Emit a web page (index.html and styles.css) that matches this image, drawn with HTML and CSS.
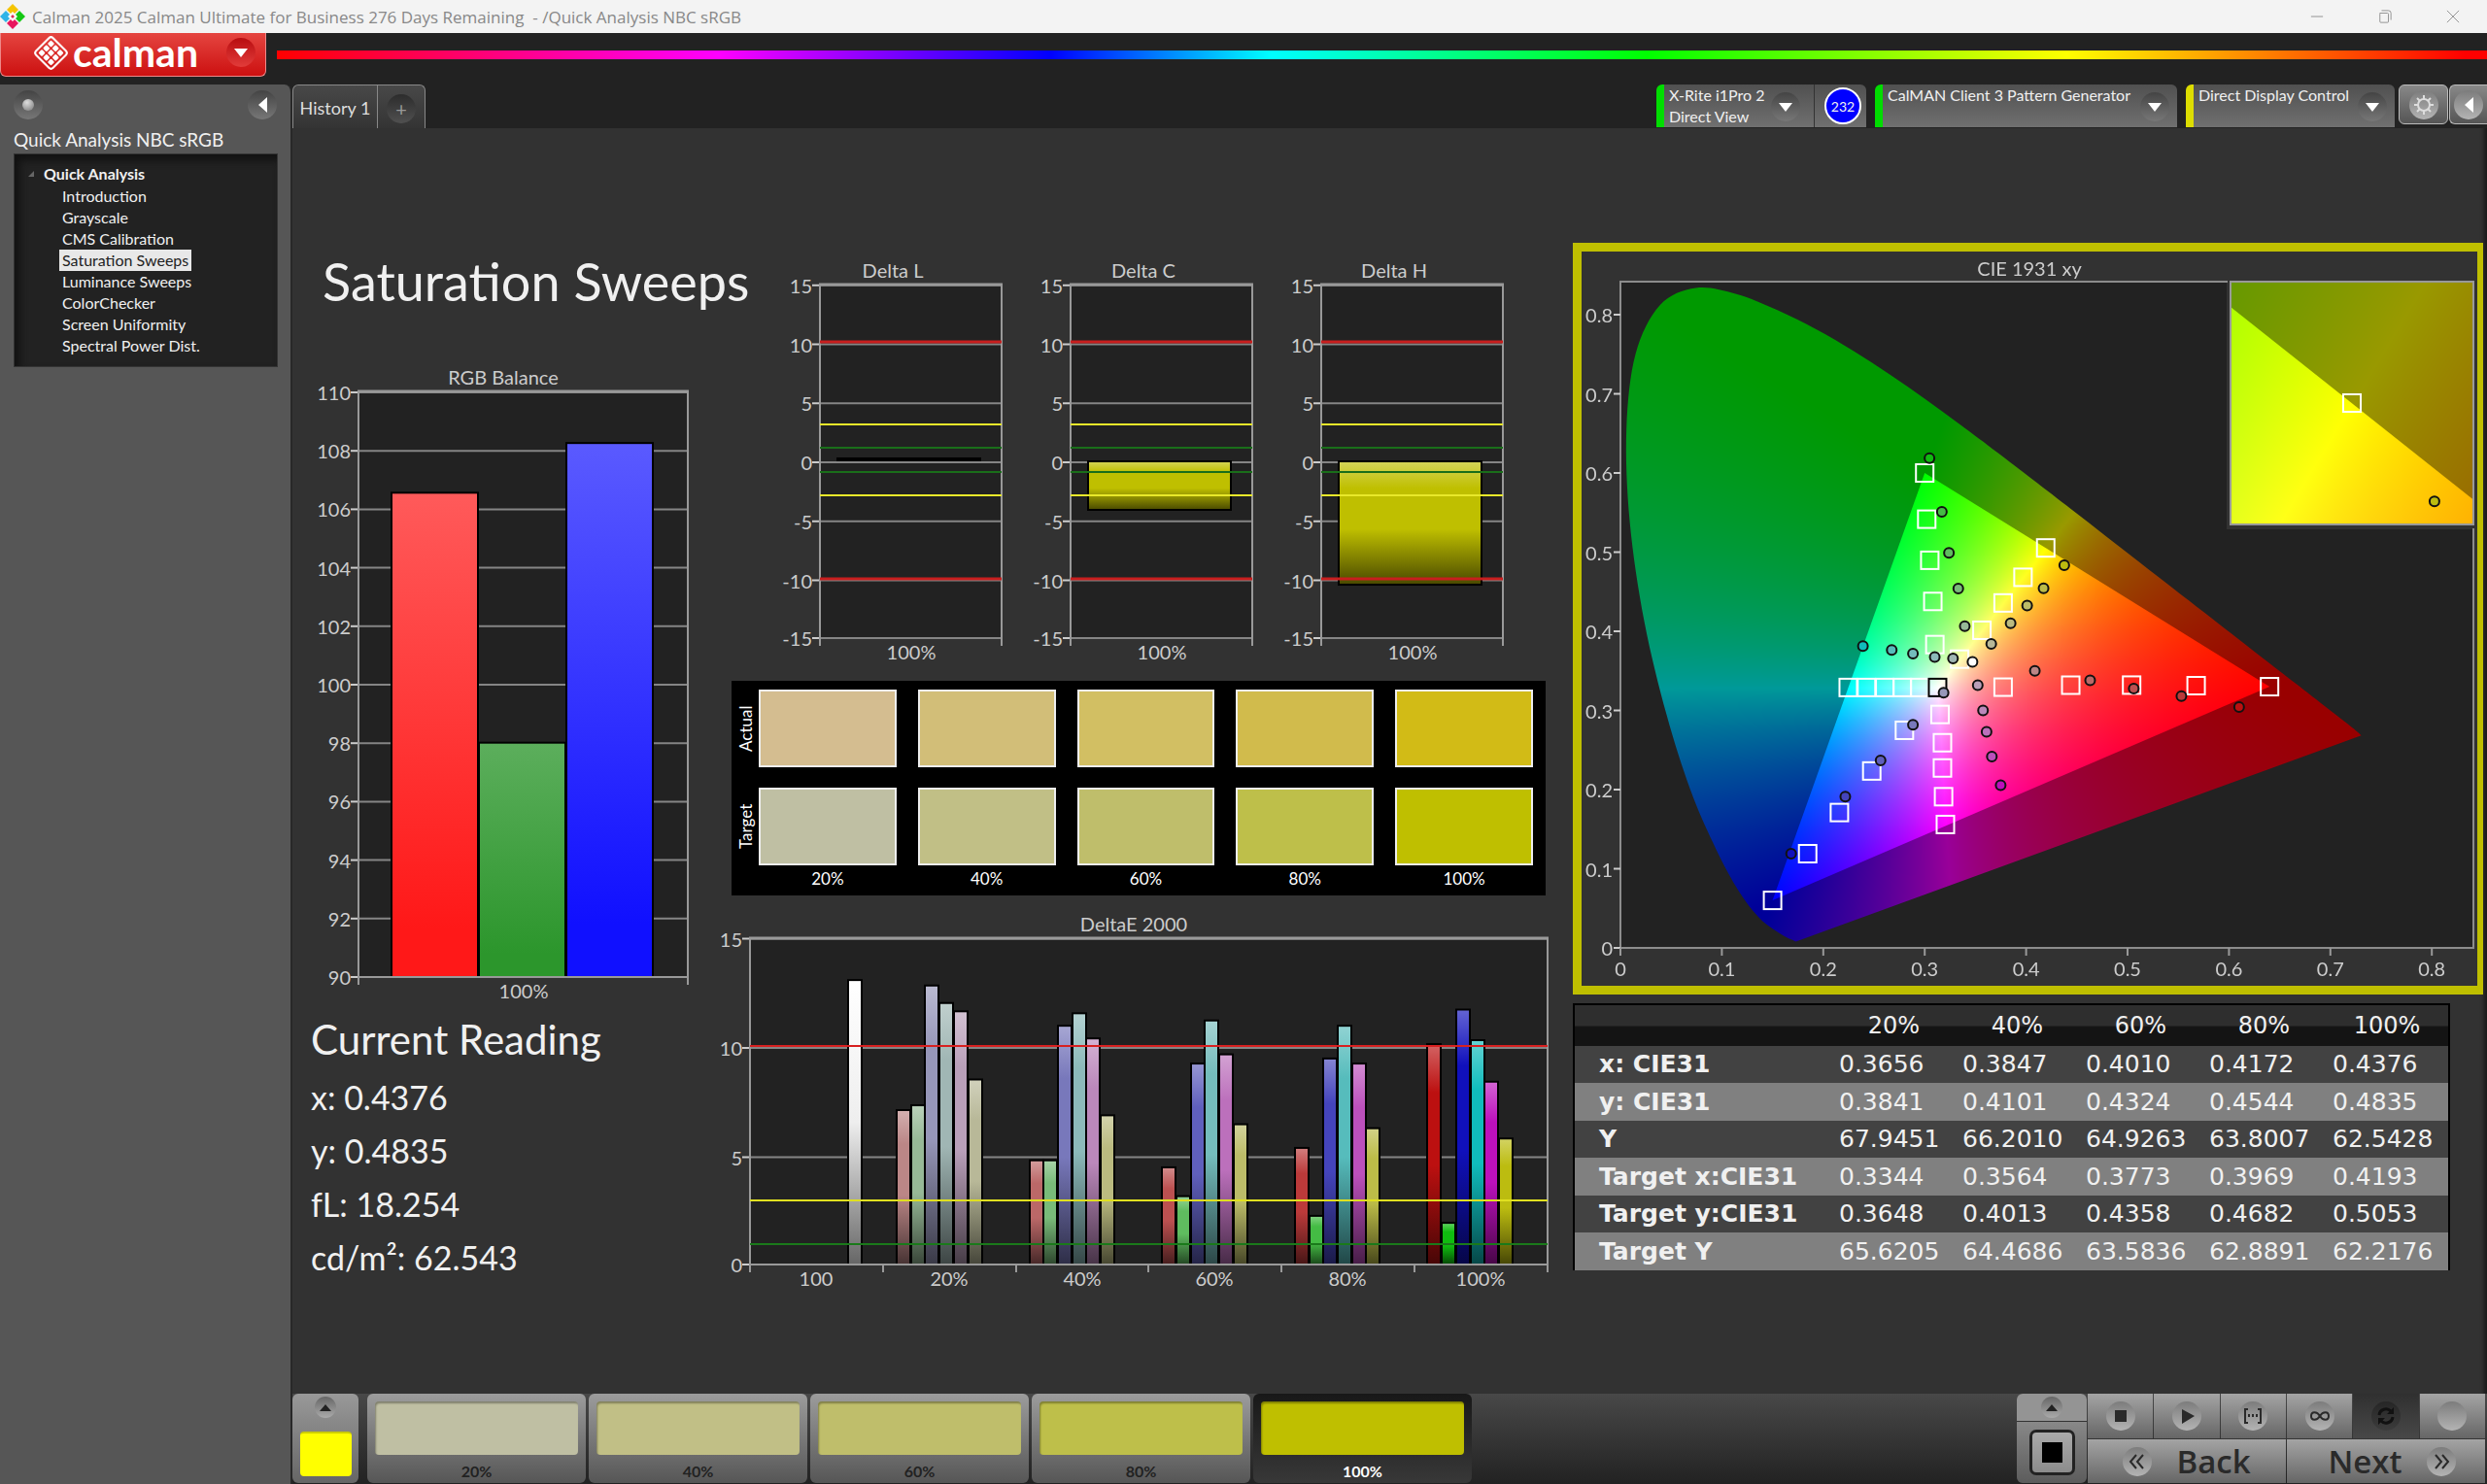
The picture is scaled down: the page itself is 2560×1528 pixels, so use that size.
FILE: index.html
```html
<!DOCTYPE html>
<html lang="en">
<head>
<meta charset="utf-8">
<title>Calman 2025 - /Quick Analysis NBC sRGB</title>
<link rel="stylesheet" href="styles.css">
</head>
<body>
<div class="app">
  <header class="titlebar">
    <svg class="app-icon" viewBox="0 0 26 26" aria-hidden="true">
      <path fill="#f5c400" d="M13 0l6 6-6 6-6-6z"/><path fill="#2fb4e8" d="M6 7l6 6-6 6-6-6z"/>
      <path fill="#14c814" d="M20 7l6 6-6 6-6-6z"/><path fill="#e8175d" d="M13 14l6 6-6 6-6-6z"/>
      <path fill="#fff" d="M13 8l5 5-5 5-5-5z"/><path fill="#d8325a" d="M13 11l2 2-2 2-2-2z"/>
    </svg>
    <span class="titlebar-text">Calman 2025 Calman Ultimate for Business 276 Days Remaining &nbsp;- /Quick Analysis NBC sRGB</span>
    <div class="window-buttons">
      <button aria-label="Minimize"><svg viewBox="0 0 16 16"><path d="M1 8h14"/></svg></button>
      <button aria-label="Restore"><svg viewBox="0 0 16 16"><path d="M2 4h9q1 0 1 1v9q0 1-1 1H3q-1 0-1-1V5zM4 1h8q3 0 3 3v8"/></svg></button>
      <button aria-label="Close"><svg viewBox="0 0 16 16"><path d="M1 1l14 14M15 1L1 15"/></svg></button>
    </div>
  </header>

  <div class="brandbar">
    <button class="logo">
      <svg viewBox="0 0 36 36" aria-hidden="true">
        <g transform="rotate(45 18 18)" fill="#fff">
          <rect x="6" y="6" width="24" height="24" rx="3" fill="none" stroke="#fff" stroke-width="2"/>
          <rect x="9" y="9" width="5" height="5" rx="1"/><rect x="15.500" y="9" width="5" height="5" rx="1"/><rect x="22" y="9" width="5" height="5" rx="1"/>
          <rect x="9" y="15.500" width="5" height="5" rx="1"/><rect x="15.500" y="15.500" width="5" height="5" rx="1"/><rect x="22" y="15.500" width="5" height="5" rx="1"/>
          <rect x="9" y="22" width="5" height="5" rx="1"/><rect x="15.500" y="22" width="5" height="5" rx="1"/><rect x="22" y="22" width="5" height="5" rx="1"/>
        </g>
      </svg>
      <span class="logo-name">calman</span>
      <span class="round round-red"><i class="tri-down"></i></span>
    </button>
    <div class="rainbow"></div>
  </div>

  <div class="body">
    <aside class="sidebar">
      <div class="sidebar-top">
        <span class="round"><i class="knob"></i></span>
        <button class="round" aria-label="Collapse"><i class="tri-left"></i></button>
      </div>
      <h2 class="workflow-name">Quick Analysis NBC sRGB</h2>
      <nav class="tree">
        <div class="tree-root"><i class="tree-mark"></i>Quick Analysis</div>
        <a href="#">Introduction</a>
        <a href="#">Grayscale</a>
        <a href="#">CMS Calibration</a>
        <a href="#" class="current">Saturation Sweeps</a>
        <a href="#">Luminance Sweeps</a>
        <a href="#">ColorChecker</a>
        <a href="#">Screen Uniformity</a>
        <a href="#">Spectral Power Dist.</a>
      </nav>
    </aside>

    <div class="main">
      <div class="tabbar">
        <div class="tabs">
          <button class="tab">History 1</button>
          <button class="tab tab-add" aria-label="Add history"><span class="round round-dim">+</span></button>
        </div>
        <div class="devices">
          <div class="device device-meter">
            <button class="device-main"><span>X-Rite i1Pro 2<br>Direct View</span><span class="round"><i class="tri-down"></i></span></button>
            <div class="device-count"><span>232</span></div>
          </div>
          <button class="device device-main device-source"><span>CalMAN Client 3 Pattern Generator</span><span class="round"><i class="tri-down"></i></span></button>
          <button class="device device-main device-display"><span>Direct Display Control</span><span class="round"><i class="tri-down"></i></span></button>
          <div class="tool-buttons">
            <button class="tool" aria-label="Settings"><span class="round round-light">
              <svg viewBox="0 0 26 26"><circle cx="13" cy="13" r="6"/><path d="M13 3v4M13 19v4M3 13h4M19 13h4M6 6l3 3M17 17l3 3M20 6l-3 3M9 17l-3 3"/></svg></span></button>
            <button class="tool tool-cut" aria-label="Collapse panel"><span class="round round-light"><i class="tri-left"></i></span></button>
          </div>
        </div>
      </div>

      <main class="page">
        <section class="col-left">
          <h1>Saturation Sweeps</h1>
          <svg class="chart" id="rgb-balance" viewBox="0 0 439 660"></svg>
          <div class="reading">
            <h2>Current Reading</h2>
            <p>x: 0.4376</p>
            <p>y: 0.4835</p>
            <p>fL: 18.254</p>
            <p>cd/m²: 62.543</p>
          </div>
        </section>

        <section class="col-mid">
          <div class="deltas">
            <svg class="chart" id="delta-l" viewBox="0 0 258 430"></svg>
            <svg class="chart" id="delta-c" viewBox="0 0 258 430"></svg>
            <svg class="chart" id="delta-h" viewBox="0 0 258 430"></svg>
          </div>
          <div class="compare">
            <span class="compare-side">Actual</span>
            <i style="background:#d4bd90"></i><i style="background:#d2be78"></i><i style="background:#d2bf63"></i><i style="background:#d1bb4c"></i><i style="background:#d2bb16"></i>
            <span class="compare-side">Target</span>
            <i style="background:#bfbfa3"></i><i style="background:#c1bf86"></i><i style="background:#bfbe6b"></i><i style="background:#bebf4a"></i><i style="background:#bfbf00"></i>
            <span></span><b>20%</b><b>40%</b><b>60%</b><b>80%</b><b>100%</b>
          </div>
          <svg class="chart" id="delta-e" viewBox="0 0 878 400"></svg>
        </section>

        <section class="col-right">
          <div class="cie">
            <canvas id="cie-fill" width="922" height="756"></canvas>
            <svg class="chart" id="cie-plot" viewBox="0 0 922 756"></svg>
          </div>
          <table class="values">
            <thead><tr><th></th><th>20%</th><th>40%</th><th>60%</th><th>80%</th><th>100%</th></tr></thead>
            <tbody>
              <tr><th>x: CIE31</th><td>0.3656</td><td>0.3847</td><td>0.4010</td><td>0.4172</td><td>0.4376</td></tr>
              <tr><th>y: CIE31</th><td>0.3841</td><td>0.4101</td><td>0.4324</td><td>0.4544</td><td>0.4835</td></tr>
              <tr><th>Y</th><td>67.9451</td><td>66.2010</td><td>64.9263</td><td>63.8007</td><td>62.5428</td></tr>
              <tr><th>Target x:CIE31</th><td>0.3344</td><td>0.3564</td><td>0.3773</td><td>0.3969</td><td>0.4193</td></tr>
              <tr><th>Target y:CIE31</th><td>0.3648</td><td>0.4013</td><td>0.4358</td><td>0.4682</td><td>0.5053</td></tr>
              <tr><th>Target Y</th><td>65.6205</td><td>64.4686</td><td>63.5836</td><td>62.8891</td><td>62.2176</td></tr>
            </tbody>
          </table>
        </section>
      </main>

      <footer class="dock">
        <div class="dock-color">
          <button class="round round-small" aria-label="Expand patterns"><i class="tri-up"></i></button>
          <i class="dock-chip"></i>
        </div>
        <div class="patterns">
          <button class="pattern"><i style="background:#bfbfa3"></i>20%</button>
          <button class="pattern"><i style="background:#c1bf86"></i>40%</button>
          <button class="pattern"><i style="background:#bfbe6b"></i>60%</button>
          <button class="pattern"><i style="background:#bebf4a"></i>80%</button>
          <button class="pattern active"><i style="background:#bfbf00"></i>100%</button>
        </div>
        <div class="window-mode">
          <button class="mode-up" aria-label="Expand window modes"><span class="round round-small"><i class="tri-up"></i></span></button>
          <button class="mode-current" aria-label="Window pattern"><i></i></button>
        </div>
        <div class="transport">
          <button aria-label="Stop"><span class="round round-light"><svg viewBox="0 0 30 30"><path class="solid" d="M9 9h12v12H9z"/></svg></span></button>
          <button aria-label="Play"><span class="round round-light"><svg viewBox="0 0 30 30"><path class="solid" d="M10 8l13 7-13 8z"/></svg></span></button>
          <button aria-label="Read series"><span class="round round-light"><svg viewBox="0 0 30 30"><path d="M10 8H7v14h3M20 8h3v14h-3"/><path class="solid" d="M10 13h2v3h-2zM14 13h2v3h-2zM18 13h2v3h-2z"/></svg></span></button>
          <button aria-label="Read continuous"><span class="round round-light"><svg viewBox="0 0 30 30"><path d="M15 15c-3-5-9-5-9 0s6 5 9 0 9-5 9 0-6 5-9 0z"/></svg></span></button>
          <button class="pressed" aria-label="Refresh"><span class="round round-dark"><svg viewBox="0 0 30 30"><path d="M8 14a7 7 0 0 1 12-4M22 16a7 7 0 0 1-12 4"/><path class="solid" d="M23 6v7h-7zM7 24v-7h7z"/></svg></span></button>
          <button aria-label="Options"><span class="round round-light"></span></button>
          <button class="nav-button"><span class="round round-light"><svg viewBox="0 0 30 30"><path d="M14 8l-6 7 6 7M21 8l-6 7 6 7"/></svg></span>Back</button>
          <button class="nav-button nav-next">Next<span class="round round-light"><svg viewBox="0 0 30 30"><path d="M9 8l6 7-6 7M16 8l6 7-6 7"/></svg></span></button>
        </div>
      </footer>
    </div>
  </div>
</div>
<script src="charts.js"></script>
</body>
</html>
```
FILE: styles.css
```css
* { box-sizing: border-box; }
body { margin: 0; background: #222; color: #f0f0f0; font-family: Lato, sans-serif; font-size: 18px; }
button { margin: 0; padding: 0; border: 0; background: none; color: inherit; font: inherit; }
h1, h2, p { margin: 0; font-weight: 400; }
i { display: block; font-style: normal; }
svg { display: block; }
.app { min-height: 100vh; display: flex; flex-direction: column; }

.titlebar { height: 34px; display: flex; align-items: center; background: #f3f3f3; color: #888; }
.app-icon { width: 26px; height: 26px; }
.titlebar-text { flex: 1; margin-left: 7px; font: 17px "Open Sans", sans-serif; }
.window-buttons { display: flex; }
.window-buttons button { width: 70px; height: 34px; display: flex; align-items: center; justify-content: center; }
.window-buttons svg { width: 14px; height: 14px; fill: none; stroke: #888; }

.brandbar { height: 53px; display: flex; align-items: flex-start; gap: 11px; }
.logo { width: 274px; height: 45px; padding: 0 10px 4px 33px; display: flex; align-items: center; border: 1px solid #e88; border-top: 0; border-radius: 0 0 6px 6px; background: linear-gradient(#e54540, #cc1010); color: #fff; }
.logo svg { width: 37px; height: 37px; }
.logo-name { flex: 1; margin-left: 4px; text-align: left; font-size: 41px; line-height: 38px; font-weight: 700; }
.rainbow { flex: 1; height: 9px; margin-top: 18px; background: linear-gradient(90deg, #f00 0%, #f0f 20%, #00f 35%, #0ff 45%, #0f0 62%, #ff0 81%, #f00 99%); }

.round { flex: none; width: 30px; height: 30px; display: flex; align-items: center; justify-content: center; border-radius: 50%; background: linear-gradient(#444, #777); }
.round-red { background: linear-gradient(#b80d10, #e23c3a); }
.round-dim { background: linear-gradient(#2c2c2c, #505050); color: #999; font-size: 20px; }
.round-light { background: linear-gradient(#7c7c7c, #b4b4b4); }
.round-dark { background: linear-gradient(#262626, #3c3c3c); }
.round-small { width: 22px; height: 22px; background: linear-gradient(#666, #aaa); }
.tri-down { border: 7px solid transparent; border-top: 9px solid #fff; border-bottom: 0; }
.tri-left { border: 8px solid transparent; border-right: 9px solid #fff; border-left: 0; }
.tri-up { border: 6px solid transparent; border-bottom: 7px solid #222; border-top: 0; }
.knob { width: 12px; height: 12px; border-radius: 50%; background: radial-gradient(circle at 40% 30%, #ddd, #777); }

.body { flex: 1; display: grid; grid-template-columns: 301px minmax(0, 1fr); }
.sidebar { padding: 6px 14px; background: #565656; border-right: 2px solid #282828; border-radius: 0 8px 0 0; }
.sidebar-top { display: flex; justify-content: space-between; height: 34px; }
.workflow-name { margin: 5px 0 0; font-size: 19px; line-height: 24px; }
.tree { width: 272px; height: 220px; margin-top: 2px; padding: 8px 0 0 14px; display: flex; flex-direction: column; align-items: flex-start; background: #222; border: 1px solid #333; box-shadow: inset 5px 6px 8px #111; font-size: 16px; line-height: 22px; }
.tree-root { display: flex; align-items: center; height: 24px; font-weight: 700; }
.tree-mark { width: 0; margin-right: 10px; border-left: 6px solid transparent; border-bottom: 6px solid #666; }
.tree a { margin-left: 32px; padding: 0 3px; color: inherit; text-decoration: none; white-space: nowrap; }
.tree .current { background: #e8e8e8; color: #222; }

.main { display: flex; flex-direction: column; background: #323232; box-shadow: inset -5px 0 4px -2px #181818; }
.tabbar { height: 45px; display: flex; justify-content: space-between; background: #222; }
.tabs { display: flex; border: 1px solid #888; border-bottom: 0; border-radius: 6px 6px 0 0; background: linear-gradient(#484848, #343434); }
.tab { width: 86px; padding-top: 2px; font-size: 18px; color: #ddd; }
.tab-add { width: 49px; padding-top: 4px; display: flex; align-items: center; justify-content: center; border-left: 1px solid #888; }
.devices { display: flex; }
.device { height: 44px; margin-right: 9px; border-left: 8px solid #0c0; border-radius: 6px 6px 0 0; background: linear-gradient(#505050, #707070); }
.device-main { display: flex; justify-content: space-between; padding: 0 8px 0 5px; text-align: left; font-size: 16px; line-height: 22px; white-space: nowrap; }
.device-main .round { margin-top: 8px; }
.device-meter { width: 216px; display: flex; border-color: #0d0; }
.device-meter .device-main { flex: 1; padding-right: 14px; }
.device-source { width: 311px; border-color: #0d0; }
.device-display { width: 215px; margin-right: 4px; border-color: #dd0; }
.device-count { width: 54px; padding: 3px 0 0 10px; border-left: 1px solid #333; }
.device-count span { width: 38px; height: 38px; display: flex; align-items: center; justify-content: center; border: 2px solid #fff; border-radius: 50%; background: #00f; font-size: 14px; }
.tool-buttons { display: flex; gap: 1px; width: 91px; overflow: hidden; }
.tool { flex: none; width: 51px; height: 41px; display: flex; align-items: center; justify-content: center; border: 1px solid #bbb; border-radius: 6px; background: linear-gradient(#888, #555); }
.tool-cut { border-right: 0; border-radius: 6px 0 0 6px; width: 39px; }
.tool svg { width: 26px; height: 26px; fill: none; stroke: #ddd; stroke-width: 2; }

.page { flex: 1; display: grid; grid-template-columns: 439fr 878fr 942fr; }
.page > section { min-width: 0; }
.chart { width: 100%; height: auto; font: 20px Lato, sans-serif; }
.chart text { fill: #ccc; }
.col-left h1 { height: 242px; padding: 122px 0 0 31px; font-size: 54px; line-height: 72px; white-space: nowrap; }
.reading { padding-left: 19px; }
.reading h2 { padding-top: 6px; font-size: 42px; line-height: 60px; }
.reading p { font-size: 34px; line-height: 55px; }
.reading p:first-of-type { margin-top: 2px; }
.deltas { display: grid; grid-template-columns: repeat(3, 1fr); padding: 129px 58px 10px 46px; }
.compare { height: 221px; margin: 0 27px 13px 13px; padding: 9px 13px 0 0; display: grid; grid-template-columns: 28px repeat(4, 164fr) 142fr; grid-template-rows: 80px 80px 28px; row-gap: 21px; background: #000; color: #fff; font-size: 17px; }
.compare i { border: 2px solid #eee; margin-right: 22px; }
.compare i:nth-of-type(5n) { margin-right: 0; }
.compare b { margin: -19px 22px 0 0; font-weight: 400; text-align: center; line-height: 24px; }
.compare b:last-child { margin-right: 0; }
.compare-side { writing-mode: vertical-rl; transform: rotate(180deg); text-align: center; line-height: 30px; }

.col-right { padding-top: 118px; }
.cie { display: grid; margin: 0 4px 9px 1px; border: 9px solid #bfbf00; border-right-width: 6px; }
.cie > * { grid-area: 1 / 1; width: 100%; height: auto; }
.values { width: 903px; margin-left: 1px; table-layout: fixed; border-collapse: collapse; border: 2px solid #000; border-bottom: 0; background: #424242; font: 25px "DejaVu Sans", sans-serif; line-height: 38px; }
.values thead { background: linear-gradient(#2e2e2e 50%, #141414 55%); }
.values thead th { height: 43px; padding: 0; font-size: 24px; font-weight: 400; text-align: center; }
.values thead th:first-child { width: 266px; }
.values tbody tr:nth-child(even) { height: 39px; background: #808080; }
.values td { padding: 0 0 0 7px; }
.values tbody th { padding: 0 0 0 25px; text-align: left; font-weight: 700; }

.dock { height: 93px; display: flex; background: linear-gradient(#484848, #222); font-weight: 700; }
.dock-color { width: 68px; height: 92px; margin-right: 9px; padding: 3px 8px; display: flex; flex-direction: column; align-items: center; gap: 14px; border-radius: 6px; background: linear-gradient(#999, #666); }
.dock-chip { width: 53px; height: 46px; border-radius: 4px; border-top: 2px solid #cc0; background: #ff0; }
.patterns { flex: 1; display: flex; gap: 3px; }
.pattern { width: 225px; height: 92px; padding: 8px 8px 0; display: flex; flex-direction: column; align-items: center; gap: 7px; border-radius: 6px; background: linear-gradient(#9c9c9c, #565656); color: #222; font-size: 16px; line-height: 20px; }
.pattern i { width: 100%; height: 55px; border-radius: 4px; box-shadow: inset 1px 2px 2px #0005; }
.pattern.active { background: linear-gradient(#181818, #383838); color: #fff; }
.window-mode { width: 72px; height: 92px; margin-right: 1px; display: flex; flex-direction: column; border-radius: 6px; overflow: hidden; background: #333; gap: 1px; }
.mode-up { height: 28px; display: flex; align-items: center; justify-content: center; background: #949494; }
.mode-current { flex: 1; display: flex; align-items: center; justify-content: center; background: linear-gradient(#888, #5c5c5c); }
.mode-current i { width: 47px; height: 47px; border: 3px solid #222; border-radius: 7px; background: linear-gradient(#000, #000) center / 21px 21px no-repeat, linear-gradient(#aaa, #8c8c8c); }
.transport { width: 411px; padding-right: 2px; display: grid; grid-template-columns: repeat(6, 1fr); grid-template-rows: 46px 45px; gap: 1px; align-content: start; }
.transport button { display: flex; align-items: center; justify-content: center; background: linear-gradient(#a4a4a4, #666); color: #2a2a2a; }
.transport .pressed { background: linear-gradient(#303030, #484848); }
.transport .pressed svg { stroke: #111; stroke-width: 3; }
.transport .pressed .solid { fill: #111; }
.transport .nav-button { grid-column: span 3; gap: 25px; font: 600 33px "Open Sans", sans-serif; }
.transport .nav-next { padding-left: 12px; }
.transport svg { width: 30px; height: 30px; fill: none; stroke: #2a2a2a; stroke-width: 2; }
.transport .solid { fill: #2a2a2a; stroke: none; }
```
FILE: charts.js
```js
const NS = 'http://www.w3.org/2000/svg';

function add(parent, name, attrs, text) {
  const el = document.createElementNS(NS, name);
  for (const key in attrs) el.setAttribute(key, attrs[key]);
  if (text !== undefined) el.textContent = text;
  parent.appendChild(el);
  return el;
}
function label(svg, x, y, text, anchor) {
  add(svg, 'text', { x, y: y + 7, 'text-anchor': anchor || 'middle' }, text);
}
function hline(svg, x1, x2, y, color, width) {
  add(svg, 'line', { x1, x2, y1: y, y2: y, stroke: color, 'stroke-width': width });
}
function vline(svg, x, y1, y2) {
  add(svg, 'line', { x1: x, x2: x, y1, y2, stroke: '#999', 'stroke-width': 2 });
}
let gradientCount = 0;
function gradient(svg, stops) {
  const id = 'g' + (++gradientCount);
  const g = add(svg, 'linearGradient', { id, x1: 0, y1: 0, x2: 0, y2: 1 });
  stops.forEach(([offset, color]) => add(g, 'stop', { offset, 'stop-color': color }));
  return 'url(#' + id + ')';
}
function mix(hex, other, t) {
  const p = s => [1, 3, 5].map(i => parseInt(s.substr(i, 2), 16));
  const a = p(hex), b = p(other);
  return 'rgb(' + a.map((v, i) => Math.round(v + (b[i] - v) * t)).join(',') + ')';
}
function shade(svg, c) {
  return gradient(svg, [[0, mix(c, '#ffffff', 0.35)], [0.22, c], [0.55, c], [1, mix(c, '#000000', 0.62)]]);
}
function bar(svg, x, y, w, h, fill) {
  add(svg, 'rect', { x: x + 1, y: y + 1, width: w - 2, height: h - 1, fill, stroke: '#000', 'stroke-width': 2 });
}

/* Frame, value axis and grid lines shared by the bar charts. */
function frame(svg, o) {
  add(svg, 'rect', { x: o.left, y: o.top, width: o.right - o.left, height: o.bottom - o.top, fill: '#222' });
  for (let v = o.min; v <= o.max; v += o.step) {
    const y = Math.min(o.y(v), o.bottom);
    hline(svg, o.left, o.right, y, '#858585', 2);
    hline(svg, o.left - 8, o.left, y, '#ccc', 2);
    label(svg, o.left - 8, y + 1, v, 'end');
  }
  hline(svg, o.left - 1, o.right + 1, o.top, '#999', 3);
  vline(svg, o.left, o.top, o.bottom + 8);
  vline(svg, o.right, o.top, o.bottom + 8);
  label(svg, o.titleX, o.top - 14, o.title);
}

function rgbBalance() {
  const svg = document.getElementById('rgb-balance');
  const y = v => 632 - (v - 90) * 30.1;
  frame(svg, { left: 68, right: 407, top: 29, bottom: 632, min: 90, max: 110, step: 2, y, title: 'RGB Balance', titleX: 217 });
  [[101, 106.6, '#ff5a5a', '#ff1818'], [191, 98.05, '#5cae5c', '#2c962c'], [281, 108.3, '#5a5aff', '#1010ff']].forEach(b =>
    bar(svg, b[0], y(b[1]), 91, 632 - y(b[1]), gradient(svg, [[0, b[2]], [0.9, b[3]]])));
  hline(svg, 68, 407, 632, '#999', 2);
  label(svg, 238, 647, '100%');
}

function deltaChart(id, title, top, bottom) {
  const svg = document.getElementById(id);
  const y = v => 215 - v * 12.15;
  frame(svg, { left: 58, right: 245, top: 32, bottom: 396, min: -15, max: 15, step: 5, y, title, titleX: 133 });
  if (bottom - top < 6) add(svg, 'rect', { x: 75, y: top, width: 149, height: bottom - top, fill: '#000' });
  else bar(svg, 75, top, 149, bottom - top, shade(svg, '#bfbf00'));
  [[91, '#c81e1e', 3], [335, '#c81e1e', 3], [176, '#e8e82a', 2], [249, '#e8e82a', 2], [200, '#1a6e1a', 2], [225, '#1a6e1a', 2]]
    .forEach(l => hline(svg, 58, 245, l[0], l[1], l[2]));
  label(svg, 152, 411, '100%');
}

const series = {
  20: ['#bb8686', '#97b997', '#9797b9', '#a0b6b4', '#b99fb9', '#b8b898'],
  40: ['#bb6868', '#79bb79', '#7878bb', '#8cbaba', '#bb88bb', '#bbbb80'],
  60: ['#bc5050', '#5fbc5f', '#5f5fbc', '#74bcbc', '#bc70bc', '#bcbc68'],
  80: ['#bc3a3a', '#44bc44', '#4444bc', '#56bcbc', '#bc50bc', '#bcbc48'],
  100: ['#bc1010', '#10bc10', '#1010bc', '#10bcbc', '#bc10bc', '#bcbc10']
};

function deltaE() {
  const svg = document.getElementById('delta-e');
  const y = v => 369 - v * 22.5;
  frame(svg, { left: 32, right: 853, top: 31, bottom: 367, min: 0, max: 15, step: 5, y, title: 'DeltaE 2000', titleX: 427 });
  bar(svg, 132, y(13.15), 16, 367 - y(13.15), gradient(svg, [[0, '#fff'], [0.5, '#eee'], [1, '#666']]));
  const data = {
    20: [7.2, 7.42, 12.9, 12.1, 11.72, 8.6], 40: [4.9, 4.9, 11.06, 11.63, 10.48, 6.96],
    60: [4.58, 3.26, 9.33, 11.3, 9.75, 6.55], 80: [5.47, 2.36, 9.56, 11.06, 9.33, 6.37], 100: [10.22, 2.04, 11.8, 10.4, 8.5, 5.9]
  };
  Object.keys(data).forEach((k, g) => data[k].forEach((v, i) =>
    bar(svg, Math.round(182 + g * 136.6 + i * 14.7), y(v), 16, 367 - y(v), shade(svg, series[k][i]))));
  hline(svg, 32, 853, 142, '#d82020', 2);
  hline(svg, 32, 853, 301, '#e0e020', 2);
  hline(svg, 32, 853, 346, '#1a7a1a', 2);
  hline(svg, 32, 853, 367, '#999', 2);
  ['100', '20%', '40%', '60%', '80%', '100%'].forEach((t, i) => {
    vline(svg, Math.round(32 + i * 136.8), 367, 375);
    label(svg, Math.round(100 + i * 136.8), 382, t);
  });
}

/* Chromaticity diagram */
const locus = [[.173, .008], [.1714, .009], [.1644, .0129], [.1566, .0187], [.144, .0297], [.1355, .0399], [.1241, .0578], [.1096, .0868],
  [.0913, .1327], [.0687, .2007], [.0454, .295], [.0235, .4127], [.0092, .5384], [.0059, .6548], [.0149, .7502], [.0389, .812], [.0743, .8338],
  [.1142, .8262], [.1547, .8059], [.1929, .7816], [.2296, .7543], [.2658, .7243], [.3016, .6923], [.3373, .6589], [.3731, .6245],
  [.4441, .5547], [.5125, .4866], [.5752, .4242], [.627, .3725], [.6658, .334], [.6915, .3083], [.719, .2809], [.7305, .2685]];
const px = x => 40 + x * 1044, py = y => 717 - y * 815;
const ix = x => 793 + (x - 0.4193) * 4640, iy = y => 156 - (y - 0.5053) * 4640;

function xyColor(x, y, level) {
  const Y = 1, X = x / y, Z = (1 - x - y) / y;
  const rgb = [3.2406 * X - 1.5372 * Y - 0.4986 * Z, -0.9689 * X + 1.8758 * Y + 0.0415 * Z, 0.0557 * X - 0.204 * Y + 1.057 * Z].map(v => Math.max(v, 0));
  const m = Math.max(...rgb);
  return rgb.map(v => 255 * level * v / m);
}
function layer(left, top, w, h, toX, toY, level) {
  const c = document.createElement('canvas');
  c.width = w; c.height = h;
  const ctx = c.getContext('2d'), img = ctx.createImageData(w, h);
  for (let j = 0, k = 0; j < h; j++) for (let i = 0; i < w; i++, k += 4) {
    const rgb = xyColor(toX(left + i), Math.max(toY(top + j), 0.001), level);
    img.data[k] = rgb[0]; img.data[k + 1] = rgb[1]; img.data[k + 2] = rgb[2]; img.data[k + 3] = 255;
  }
  ctx.putImageData(img, 0, 0);
  return c;
}
function clipped(ctx, path, image, x, y) {
  ctx.save(); ctx.clip(path); ctx.drawImage(image, x, y); ctx.restore();
}
function triangle(fx, fy) {
  const p = new Path2D();
  p.moveTo(fx(.64), fy(.33)); p.lineTo(fx(.3), fy(.6)); p.lineTo(fx(.15), fy(.06)); p.closePath();
  return p;
}
function cieFill() {
  const ctx = document.getElementById('cie-fill').getContext('2d');
  ctx.fillStyle = '#323232'; ctx.fillRect(0, 0, 922, 756);
  ctx.fillStyle = '#222'; ctx.fillRect(40, 31, 878, 686);
  const P = locus.map(([x, y]) => [px(x), py(y)]), shape = new Path2D();
  shape.moveTo(...P[0]);
  for (let i = 0; i < P.length - 1; i++) {
    const a = P[i - 1] || P[i], b = P[i], c = P[i + 1], d = P[i + 2] || c;
    shape.bezierCurveTo(b[0] + (c[0] - a[0]) / 6, b[1] + (c[1] - a[1]) / 6, c[0] - (d[0] - b[0]) / 6, c[1] - (d[1] - b[1]) / 6, c[0], c[1]);
  }
  shape.closePath();
  const toX = x => (x - 40) / 1044, toY = y => (717 - y) / 815;
  clipped(ctx, shape, layer(40, 31, 800, 686, toX, toY, 0.6), 40, 31);
  clipped(ctx, triangle(px, py), layer(40, 31, 800, 686, toX, toY, 1), 40, 31);
  ctx.fillStyle = '#323232'; ctx.fillRect(664, 28, 258, 258);
  const zx = x => 0.4193 + (x - 793) / 4640, zy = y => 0.5053 - (y - 156) / 4640;
  ctx.drawImage(layer(668, 31, 250, 250, zx, zy, 0.6), 668, 31);
  const inset = new Path2D(); inset.rect(668, 31, 250, 250);
  ctx.save(); ctx.clip(inset);
  clipped(ctx, triangle(ix, iy), layer(668, 31, 250, 250, zx, zy, 1), 668, 31);
  ctx.restore();
}
function square(svg, cx, cy, color) {
  add(svg, 'rect', { x: cx - 9, y: cy - 9, width: 18, height: 18, fill: 'none', stroke: color || '#fff', 'stroke-width': 2 });
}
function dot(svg, cx, cy, fill) {
  add(svg, 'circle', { cx, cy, r: 5, fill, stroke: '#111', 'stroke-width': 2 });
}
function ciePlot() {
  const svg = document.getElementById('cie-plot');
  add(svg, 'path', { d: 'M665 31H40V717H918V285', fill: 'none', stroke: '#8c8c8c', 'stroke-width': 2 });
  add(svg, 'rect', { x: 668, y: 31, width: 250, height: 250, fill: 'none', stroke: '#999', 'stroke-width': 2 });
  label(svg, 461, 18, 'CIE 1931 xy');
  for (let i = 0; i <= 8; i++) {
    const t = i ? '0.' + i : '0';
    hline(svg, 33, 40, py(i / 10), '#ccc', 2);
    vline(svg, px(i / 10), 717, 725);
    label(svg, 32, py(i / 10) + 1, t, 'end');
    label(svg, px(i / 10), 739, t);
  }
  [[.3, .6], [.302, .5416], [.305, .4897], [.308, .4377], [.31, .3832],
    [.4193, .5053], [.3969, .4682], [.3773, .4358], [.3564, .4013], [.3344, .3648],
    [.64, .33], [.5676, .3313], [.504, .332], [.444, .3319], [.3773, .3294],
    [.2246, .329], [.2426, .329], [.2606, .329], [.278, .329], [.295, .329],
    [.3204, .1559], [.3186, .191], [.3175, .2273], [.3175, .2592], [.3151, .2949],
    [.15, .06], [.1846, .119], [.2159, .171], [.2478, .2235], [.28, .2749]].forEach(([x, y]) => square(svg, px(x), py(y)));
  square(svg, px(.3127), py(.329), '#000');
  const readings = [
    [[.4086, .35], [.4631, .3381], [.5061, .3275], [.5531, .3181], [.61, .3043]],
    [[.3395, .4064], [.3331, .454], [.3239, .499], [.3169, .551], [.3047, .6187]],
    [[.3186, .3225], [.2884, .2818], [.2565, .2367], [.2217, .191], [.1683, .119]],
    [[.3279, .3657], [.3099, .3676], [.2884, .3719], [.2675, .3763], [.2391, .3813]],
    [[.3523, .3319], [.3575, .3], [.361, .273], [.3662, .2417], [.3749, .2054]],
    [[.3656, .3841], [.3847, .4101], [.401, .4324], [.4172, .4544], [.4376, .4835]]];
  readings.forEach((row, hue) => row.forEach(([x, y], i) => dot(svg, px(x), py(y), series[(i + 1) * 20][hue])));
  dot(svg, px(.3471), py(.3613), '#fff');
  square(svg, 793, 156);
  dot(svg, ix(.4376), iy(.4835), '#bcbc10');
}

rgbBalance();
deltaChart('delta-l', 'Delta L', 210, 214);
deltaChart('delta-c', 'Delta C', 213, 264);
deltaChart('delta-h', 'Delta H', 213, 341);
deltaE();
cieFill();
ciePlot();
```
